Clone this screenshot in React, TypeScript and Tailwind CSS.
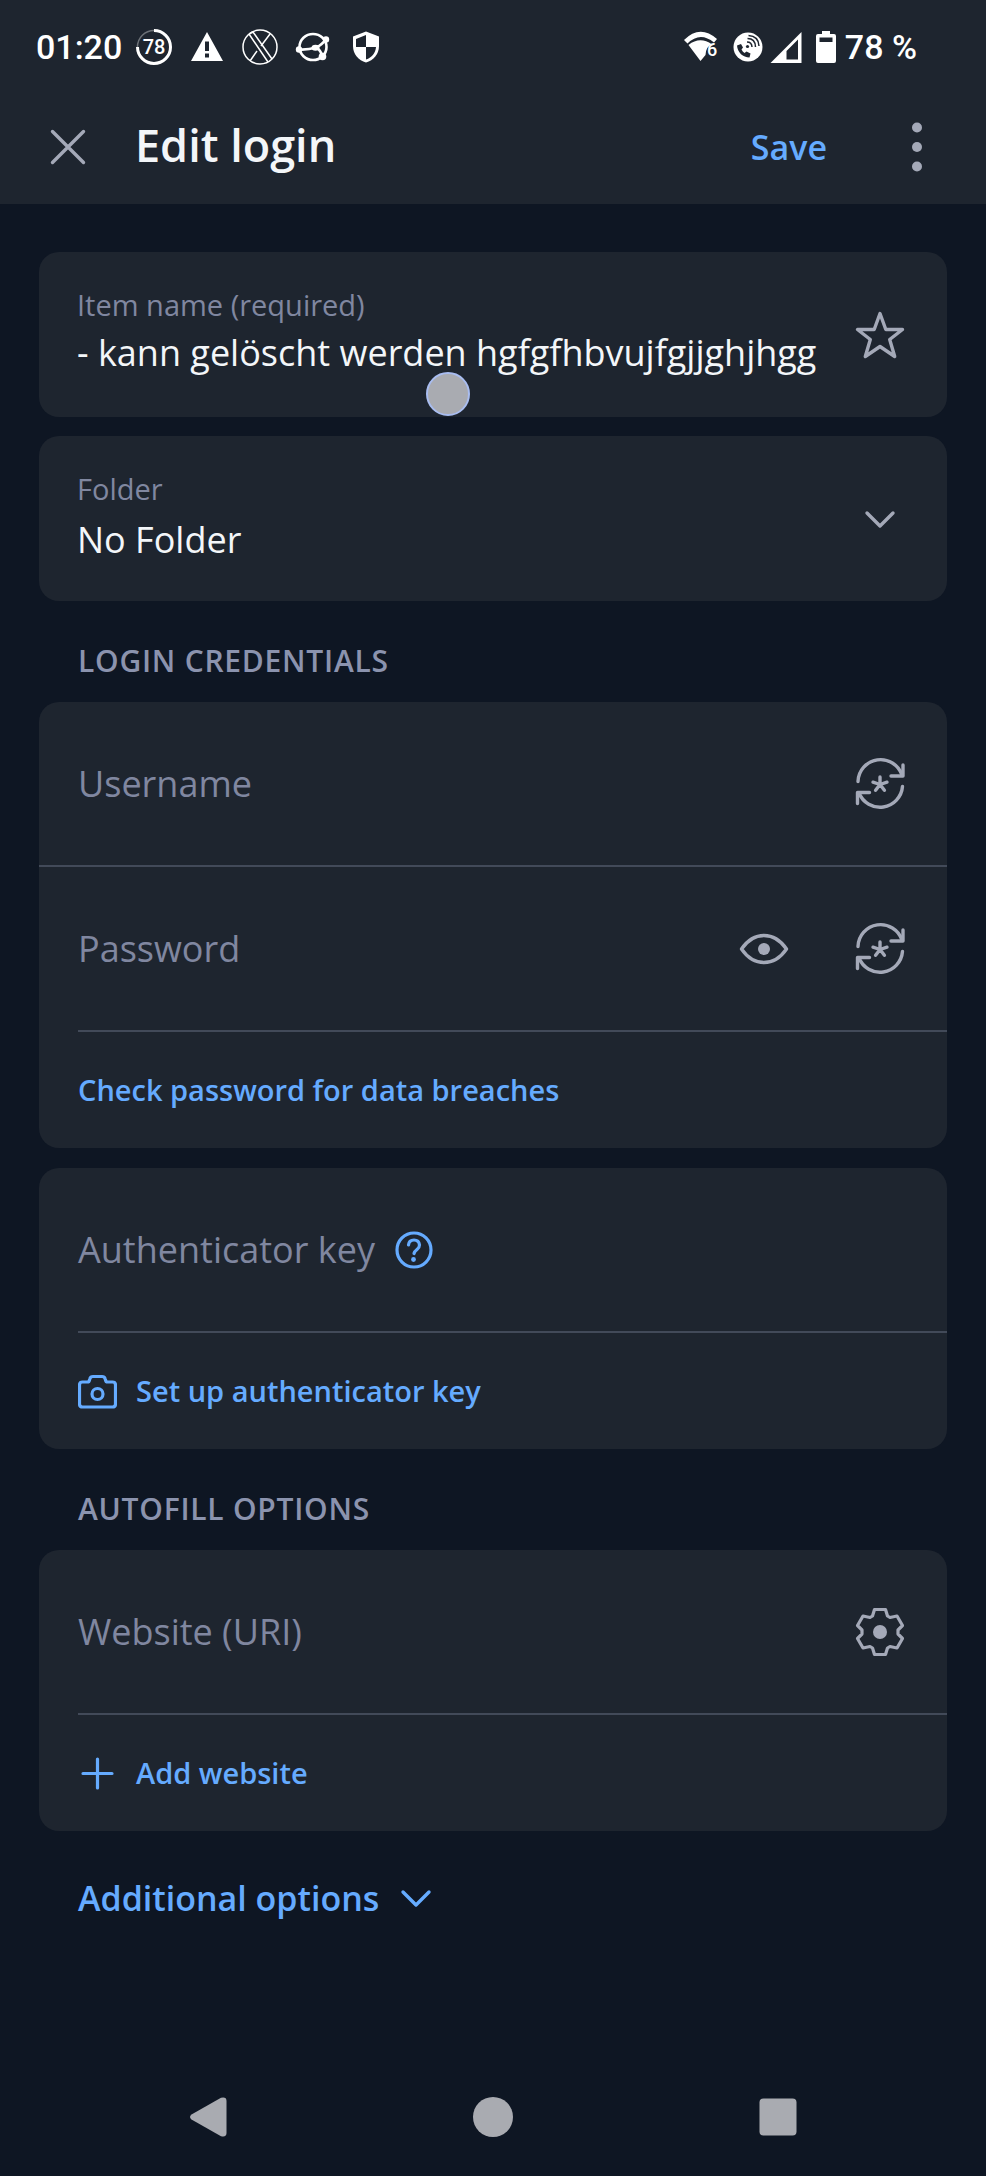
import React, { useState } from 'react';

const GenerateIcon: React.FC = () => (
  <svg className="size-[58px]" viewBox="0 0 58 58" fill="none" stroke="currentColor" strokeWidth="3.4" strokeLinecap="round" strokeLinejoin="round" aria-hidden="true">
    <path d="M7 26.500A22.600 22.600 0 0 1 51 20" />
    <path d="M52 10V21H40" />
    <path d="M51.500 31.500A22.600 22.600 0 0 1 8 38" />
    <path d="M6.500 48.500V37.500H18.500" />
    <path d="M29 29.500V22M29 29.500L36 27.200M29 29.500L33.400 35.300M29 29.500L24.600 35.300M29 29.500L22 27.200" />
  </svg>
);

const EyeIcon: React.FC = () => (
  <svg className="size-[58px]" viewBox="0 0 58 58" fill="none" stroke="currentColor" strokeWidth="3.4" strokeLinejoin="round" aria-hidden="true">
    <path d="M6.500 29C12 21 19 15.500 29 15.500S46 21 51.500 29C46 37 39 42.500 29 42.500S12 37 6.500 29Z" />
    <circle cx="29" cy="29" r="6" fill="currentColor" stroke="none" />
  </svg>
);

const StarIcon: React.FC = () => (
  <svg className="size-[58px]" viewBox="0 0 58 58" fill="none" stroke="currentColor" strokeWidth="3.4" strokeLinejoin="round" aria-hidden="true">
    <path d="M29 7.500L34.800 23.500H51.500L38.700 33.500L43.700 50.500L29 40.500L14.300 50.500L19.300 33.500L6.500 23.500H23.200Z" />
  </svg>
);

const GearIcon: React.FC = () => (
  <svg className="size-[58px]" viewBox="0 0 58 58" fill="none" stroke="currentColor" strokeWidth="3.2" strokeLinejoin="round" aria-hidden="true">
    <path d="M23.500 6.500H34.500L36.500 13L39 14.500L46 13L51.500 22.500L47 27V31L51.500 35.500L46 45L39 43.500L36.500 45L34.500 51.500H23.500L21.500 45L19 43.500L12 45L6.500 35.500L11 31V27L6.500 22.500L12 13L19 14.500L21.500 13Z" />
    <circle cx="29" cy="29" r="7" fill="currentColor" stroke="none" />
  </svg>
);

const ChevronIcon: React.FC = () => (
  <svg className="size-[58px]" viewBox="0 0 58 58" fill="none" stroke="currentColor" strokeWidth="3.4" strokeLinecap="round" strokeLinejoin="round" aria-hidden="true">
    <path d="M16 23L29 36L42 23" />
  </svg>
);

const StatusBar: React.FC = () => (
  <div className="flex h-[94px] items-center justify-between pr-[69px] pl-[36px] font-[Roboto,sans-serif] text-[34px] font-medium text-white">
    <div className="flex items-center gap-[14px]">
      <span>01:20</span>
      <div className="flex items-center gap-[17px]">
        {/* Battery ring */}
        <svg className="size-9" viewBox="0 0 36 36" fill="none" aria-hidden="true">
          <circle cx="18" cy="18" r="16.500" stroke="white" strokeOpacity=".35" strokeWidth="1.500" />
          <path d="M18 1.500A16.500 16.500 0 1 1 1.500 18" stroke="white" strokeWidth="3" />
          <text x="18" y="25" textAnchor="middle" fontSize="20" fontWeight="500" fill="white">78</text>
        </svg>
        {/* Warning */}
        <svg className="size-9" viewBox="0 0 36 36" fill="white" aria-hidden="true">
          <path fillRule="evenodd" d="M18 3L34 32H2ZM16 12.500V22H20V12.500ZM16 24.500V28.500H20V24.500Z" />
        </svg>
        <svg className="size-9" viewBox="0 0 36 36" fill="none" stroke="white" strokeWidth="1.500" aria-hidden="true">
          <circle cx="18" cy="18" r="17" />
          <path d="M7 5L26 33M11 3L30 30M7 5L11 3M28 5L19 17M15 22L8 32" />
        </svg>
        {/* Network */}
        <svg className="size-9" viewBox="0 0 36 36" fill="none" stroke="white" strokeWidth="2.600" aria-hidden="true">
          <ellipse cx="18" cy="18" rx="13.500" ry="13" />
          <path d="M4 20.500Q13 21 21 18.500Q27 16 31 10M21 18.500Q26 21 27.500 28" />
          <g fill="white" stroke="none">
            <circle cx="4" cy="20.500" r="3.200" />
            <circle cx="31" cy="10.500" r="3.200" />
            <circle cx="27.500" cy="27.500" r="3.800" />
            <ellipse cx="20.500" cy="18.800" rx="4" ry="3" />
          </g>
        </svg>
        {/* Shield */}
        <svg className="size-9" viewBox="0 0 36 36" aria-hidden="true">
          <path d="M18 2.500L31 7.500V17C31 25 25.500 31.500 18 33.500C10.500 31.500 5 25 5 17V7.500Z" fill="white" />
          <path d="M18 6L8 10V18H18ZM18 18H28C27.500 24 24 28.500 18 30.500Z" fill="#1e252f" />
        </svg>
      </div>
    </div>
    <div className="flex items-center">
      {/* Wi-Fi 6 */}
      <svg className="h-9 w-[38px]" viewBox="0 0 38 36" aria-hidden="true">
        <path d="M1 11Q17 -5 34 10L31 13.500Q17 2 4.500 14.500Z" fill="white" />
        <path d="M5.500 16Q17 7 29 15.500Q23 17 22.500 26L17.500 32Z" fill="white" />
        <text x="24" y="27" fontSize="18" fontWeight="500" fill="white">6</text>
      </svg>
      {/* Wi-Fi calling */}
      <svg className="ml-3 size-[30px]" viewBox="0 0 30 30" fill="none" aria-hidden="true">
        <circle cx="15" cy="15" r="14.500" fill="white" />
        <path d="M4 13.500C4.500 20.500 10 25.500 16.500 25.500L17.500 21.500L13.500 19.500L11.500 21Q9.500 19.500 8.500 17.500L10 15.500L8 12Z" fill="#1e252f" />
        <circle cx="14.500" cy="14.500" r="1.600" fill="#1e252f" />
        <path d="M14 10Q18.800 10 19 15M14.500 6.500Q22.300 6.500 22.500 15M15.500 3.500Q25.500 4 26 14" stroke="#1e252f" strokeWidth="1.500" />
      </svg>
      {/* Signal */}
      <svg className="ml-[7px] size-8" viewBox="0 0 32 32" fill="white" aria-hidden="true">
        <path fillRule="evenodd" d="M31.500 1V32H.500ZM28 8.500L16.500 20V28.500H28Z" />
      </svg>
      {/* Battery */}
      <svg className="ml-[14px] h-8 w-5" viewBox="0 0 20 32" fill="white" aria-hidden="true">
        <path fillRule="evenodd" d="M6 0H14V3H18Q20 3 20 5V30Q20 32 18 32H2Q0 32 0 30V5Q0 3 2 3H6ZM3.500 6.500V11H16.500V6.500Z" />
      </svg>
      <span className="ml-[9px]">78 %</span>
    </div>
  </div>
);

const Card: React.FC<{ children: React.ReactNode }> = ({ children }) => (
  <div className="relative rounded-[20px] bg-[#1e252f]">{children}</div>
);

const SectionTitle: React.FC<{ children: React.ReactNode }> = ({ children }) => (
  <h2 className="px-[39px] pt-[38px] pb-5 text-[30px] leading-[43px] font-semibold tracking-wide text-[#8b93ae] uppercase">
    {children}
  </h2>
);

interface FieldProps {
  id: string;
  label: string;
  type?: string;
  help?: React.ReactNode;
  children?: React.ReactNode;
}

// Empty field: the label sits where the value would be
const EmptyField: React.FC<FieldProps> = ({ id, label, type = 'text', help, children }) => (
  <div className="flex h-[163px] items-center gap-[58px] pr-[38px] pl-[39px] text-[#a4a9b8]">
    <div className="flex min-w-0 flex-1 items-center gap-[10px]">
      <label htmlFor={id} className="shrink-0 text-[36px] leading-[48px] text-[#8087a0]">{label}</label>
      {help}
      <input id={id} type={type} className="min-w-0 flex-1 bg-transparent text-[36px] text-[#f3f6f9] outline-none" />
    </div>
    {children}
  </div>
);

const LinkRow: React.FC<{ icon?: React.ReactNode; children: React.ReactNode }> = ({ icon, children }) => (
  <button type="button" className="ml-[39px] flex h-[116px] items-center gap-[19px] text-[29px] font-semibold text-[#65abff]">
    {icon}
    {children}
  </button>
);

const Divider: React.FC<{ full?: boolean }> = ({ full }) => (
  <hr className={`border-0 border-t-2 border-[#424a59] ${full ? '' : 'ml-[39px]'}`} />
);

export default function App() {
  const [itemName, setItemName] = useState('- kann gelöscht werden hgfgfhbvujfgjjghjhgg');
  const [showPassword, setShowPassword] = useState(false);

  return (
    <div className="flex min-h-screen flex-col bg-[#0e1623] font-['Open_Sans',sans-serif] text-[#f3f6f9]">
      <header className="bg-[#1e252f] pb-1">
        <StatusBar />
        <div className="flex h-[106px] items-center pr-[40px] pl-[39px]">
          <button type="button" aria-label="Close" className="text-[#a4a9b8]">
            <svg className="size-[58px]" viewBox="0 0 58 58" fill="none" stroke="currentColor" strokeWidth="3.4" strokeLinecap="round" aria-hidden="true">
              <path d="M13.500 13.500L44.500 44.500M44.500 13.500L13.500 44.500" />
            </svg>
          </button>
          <h1 className="ml-[38px] flex-1 pb-1 text-[45px] font-semibold">Edit login</h1>
          <button type="button" className="text-[34px] font-semibold text-[#65abff]">Save</button>
          <button type="button" aria-label="More options" className="ml-[61px] text-[#a4a9b8]">
            <svg className="size-[58px]" viewBox="0 0 58 58" fill="currentColor" aria-hidden="true">
              <circle cx="29" cy="9.500" r="5" />
              <circle cx="29" cy="29" r="5" />
              <circle cx="29" cy="48.500" r="5" />
            </svg>
          </button>
        </div>
      </header>

      <main className="flex-1 px-[39px] pt-12">
        <Card>
          <div className="flex h-[165px] items-center gap-5 pr-[38px] pl-[38px]">
            <div className="flex min-w-0 flex-1 flex-col pb-3">
              <label htmlFor="item-name" className="text-[29px] leading-[48px] text-[#8087a0]">Item name (required)</label>
              <input
                id="item-name"
                value={itemName}
                onChange={(e) => setItemName(e.target.value)}
                className="h-12 w-full bg-transparent text-[36px] outline-none"
              />
            </div>
            <button type="button" aria-label="Favorite" className="text-[#a4a9b8]">
              <StarIcon />
            </button>
          </div>
          {/* Touch indicator */}
          <span className="absolute top-[120px] left-[387px] size-11 rounded-full border-2 border-[#a9bdf0] bg-[#a9abb1]" />
        </Card>

        <div className="mt-[19px]">
          <Card>
            <div className="flex h-[165px] items-center gap-5 pr-[38px] pl-[38px]">
              <div className="flex min-w-0 flex-1 flex-col pb-3">
                <label htmlFor="folder" className="text-[29px] leading-[48px] text-[#8087a0]">Folder</label>
                <select id="folder" className="h-12 w-full appearance-none bg-transparent text-[36px] outline-none">
                  <option>No Folder</option>
                </select>
              </div>
              <span className="pointer-events-none text-[#a4a9b8]">
                <ChevronIcon />
              </span>
            </div>
          </Card>
        </div>

        <SectionTitle>Login credentials</SectionTitle>
        <Card>
          <EmptyField id="username" label="Username">
            <button type="button" aria-label="Generate username">
              <GenerateIcon />
            </button>
          </EmptyField>
          <Divider full />
          <EmptyField id="password" label="Password" type={showPassword ? 'text' : 'password'}>
            <button type="button" aria-label="Show password" onClick={() => setShowPassword(!showPassword)}>
              <EyeIcon />
            </button>
            <button type="button" aria-label="Generate password">
              <GenerateIcon />
            </button>
          </EmptyField>
          <Divider />
          <LinkRow>Check password for data breaches</LinkRow>
        </Card>

        <div className="mt-5">
          <Card>
            <EmptyField
              id="authenticator-key"
              label="Authenticator key"
              help={
                <button type="button" aria-label="Authenticator help" className="text-[#65abff]">
                  <svg className="size-[58px]" viewBox="0 0 58 58" fill="none" stroke="currentColor" strokeWidth="3.2" strokeLinecap="round" strokeLinejoin="round" aria-hidden="true">
                    <circle cx="29" cy="29" r="17" />
                    <path d="M23.500 24Q24 19 29 19T34.500 24Q34.500 26.500 32 28.500T29 32.500" />
                    <circle cx="28.500" cy="38.500" r="2.400" fill="currentColor" stroke="none" />
                  </svg>
                </button>
              }
            />
            <Divider />
            <LinkRow
              icon={
                <svg className="size-[39px]" viewBox="0 0 39 39" fill="none" stroke="currentColor" strokeWidth="3.2" strokeLinejoin="round" aria-hidden="true">
                  <path d="M4.500 10H9.500Q11 10 11.500 8L12 6.500Q12.500 4.500 15 4.500H24Q26.500 4.500 27 6.500L27.500 8Q28 10 29.500 10H34.500Q37.500 10 37.500 13V32Q37.500 35 34.500 35H4.500Q1.500 35 1.500 32V13Q1.500 10 4.500 10Z" />
                  <circle cx="19.500" cy="22" r="5.500" />
                </svg>
              }
            >
              Set up authenticator key
            </LinkRow>
          </Card>
        </div>

        <SectionTitle>Autofill options</SectionTitle>
        <Card>
          <EmptyField id="website" label="Website (URI)">
            <button type="button" aria-label="Match detection options">
              <GearIcon />
            </button>
          </EmptyField>
          <Divider />
          <LinkRow
            icon={
              <svg className="size-[39px]" viewBox="0 0 39 39" fill="none" stroke="currentColor" strokeWidth="3.2" strokeLinecap="round" aria-hidden="true">
                <path d="M19.500 5V34M5 19.500H34" />
              </svg>
            }
          >
            Add website
          </LinkRow>
        </Card>

        <button type="button" className="mt-[38px] ml-[39px] flex items-center gap-2 text-[34px] font-semibold text-[#65abff]">
          Additional options
          <ChevronIcon />
        </button>
      </main>

      <nav aria-label="System navigation" className="flex h-[118px] items-center justify-around px-[66px] text-[#a9abb1]">
        <button type="button" aria-label="Back">
          <svg className="size-10" viewBox="0 0 40 40" fill="currentColor" aria-hidden="true">
            <path d="M3.500 17.500L33 .800Q38.500 -.500 38.500 4V36Q38.500 40.500 33 39.200L3.500 22.500Q.500 20 3.500 17.500Z" />
          </svg>
        </button>
        <button type="button" aria-label="Home">
          <svg className="size-10" viewBox="0 0 40 40" fill="currentColor" aria-hidden="true">
            <circle cx="20" cy="20" r="20" />
          </svg>
        </button>
        <button type="button" aria-label="Recent apps">
          <svg className="size-10" viewBox="0 0 40 40" fill="currentColor" aria-hidden="true">
            <rect x="1.500" y="1.500" width="37" height="37" rx="4" />
          </svg>
        </button>
      </nav>
    </div>
  );
}
